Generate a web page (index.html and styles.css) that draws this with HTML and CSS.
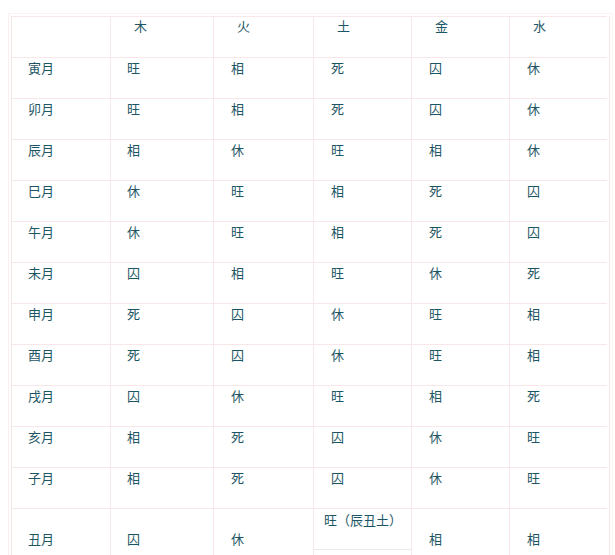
FILE: index.html
```html
<!DOCTYPE html>
<html lang="zh-CN">
<head>
<meta charset="utf-8">
<title>五行旺相休囚死</title>
<link rel="stylesheet" href="styles.css">
</head>
<body>
<div class="wrap">
  <div class="grid">
    <div class="cell head"></div>
    <div class="cell head">木</div>
    <div class="cell head">火</div>
    <div class="cell head">土</div>
    <div class="cell head">金</div>
    <div class="cell head">水</div>

    <div class="cell">寅月</div><div class="cell">旺</div><div class="cell">相</div><div class="cell">死</div><div class="cell">囚</div><div class="cell">休</div>
    <div class="cell">卯月</div><div class="cell">旺</div><div class="cell">相</div><div class="cell">死</div><div class="cell">囚</div><div class="cell">休</div>
    <div class="cell">辰月</div><div class="cell">相</div><div class="cell">休</div><div class="cell">旺</div><div class="cell">相</div><div class="cell">休</div>
    <div class="cell">巳月</div><div class="cell">休</div><div class="cell">旺</div><div class="cell">相</div><div class="cell">死</div><div class="cell">囚</div>
    <div class="cell">午月</div><div class="cell">休</div><div class="cell">旺</div><div class="cell">相</div><div class="cell">死</div><div class="cell">囚</div>
    <div class="cell">未月</div><div class="cell">囚</div><div class="cell">相</div><div class="cell">旺</div><div class="cell">休</div><div class="cell">死</div>
    <div class="cell">申月</div><div class="cell">死</div><div class="cell">囚</div><div class="cell">休</div><div class="cell">旺</div><div class="cell">相</div>
    <div class="cell">酉月</div><div class="cell">死</div><div class="cell">囚</div><div class="cell">休</div><div class="cell">旺</div><div class="cell">相</div>
    <div class="cell">戌月</div><div class="cell">囚</div><div class="cell">休</div><div class="cell">旺</div><div class="cell">相</div><div class="cell">死</div>
    <div class="cell">亥月</div><div class="cell">相</div><div class="cell">死</div><div class="cell">囚</div><div class="cell">休</div><div class="cell">旺</div>
    <div class="cell">子月</div><div class="cell">相</div><div class="cell">死</div><div class="cell">囚</div><div class="cell">休</div><div class="cell">旺</div>

    <div class="cell last">丑月</div>
    <div class="cell last">囚</div>
    <div class="cell last">休</div>
    <div class="cell last split"><div class="sub">旺（辰丑土）</div></div>
    <div class="cell last">相</div>
    <div class="cell last">相</div>
  </div>
</div>
</body>
</html>
```

FILE: styles.css
```css
html, body {
  margin: 0;
  padding: 0;
  background: #ffffff;
}

body {
  font-family: "Noto Sans CJK SC", "Noto Sans", sans-serif;
  font-size: 13px;
  color: #1c5664;
  overflow: hidden;
}

.wrap {
  margin: 13px 0 0 8px;
  width: 599px;
  border: 1px solid #fcf0f1;
  border-bottom: none;
  padding: 2px 2px 0 2px;
}

.grid {
  display: grid;
  grid-template-columns: 99px 103px 100px 98px 98px 98px;
  grid-template-rows: repeat(12, 41px) 90px;
  border-right: 1px solid #f9e6e8;
}

.cell {
  box-sizing: border-box;
  border-left: 1px solid #f9e6e8;
  border-top: 1px solid #f9e6e8;
  padding: 1px 0 0 17px;
  line-height: 17px;
  white-space: nowrap;
}

.cell:nth-child(6n+1),
.cell:nth-child(6n+2) {
  padding-left: 16px;
}

.cell.head {
  padding-left: 23px;
  padding-top: 0;
}

.cell.last {
  padding-top: 21px;
}

.cell.split {
  padding: 0;
}

.sub {
  height: 41px;
  box-sizing: border-box;
  border-bottom: 1px solid #ebe8e8;
  padding: 2px 0 0 10px;
  line-height: 17px;
}
```
